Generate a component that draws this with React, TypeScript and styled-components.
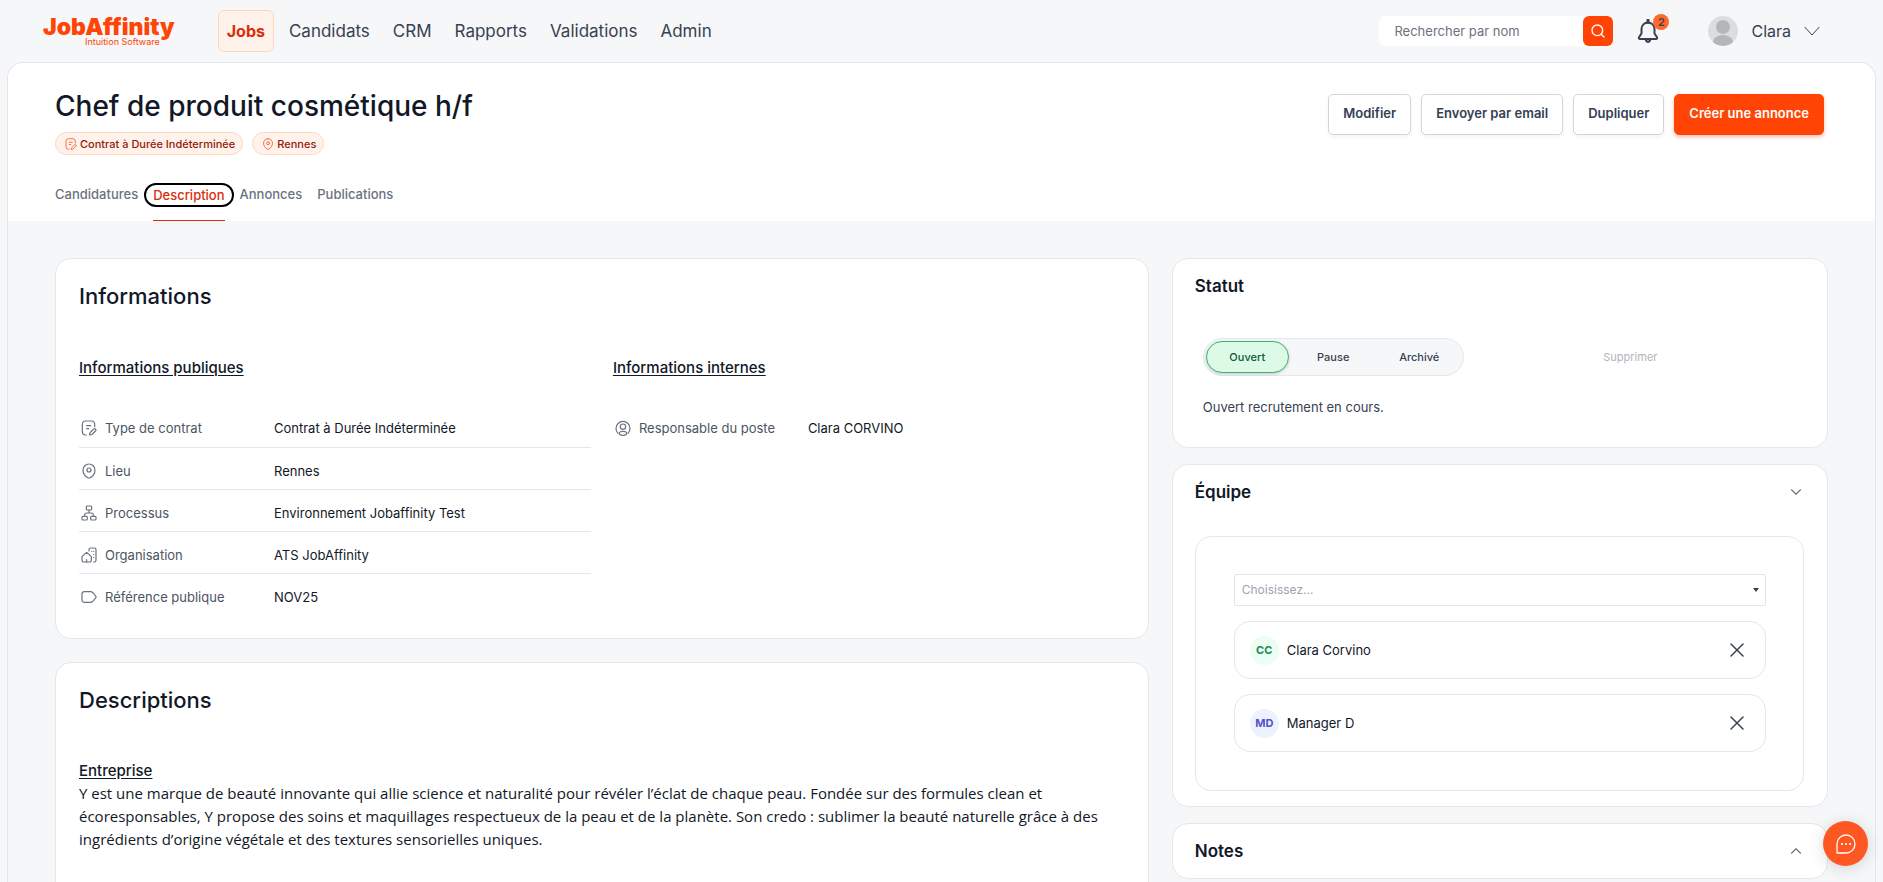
import React from 'react';
import styled, { createGlobalStyle, css } from 'styled-components';
import { ChevronDown, ChevronUp, Search, X } from 'lucide-react';

const GlobalStyle = createGlobalStyle`
  *, *::before, *::after { box-sizing: border-box; }
  body {
    margin: 0;
    background: #f5f7f9;
    color: #111827;
    font-family: Inter, "Liberation Sans", sans-serif;
    font-size: 13px;
    line-height: 20px;
  }
  button, input, select { font: inherit; color: inherit; }
  h1, h2, h3, p, ul, dl, dd { margin: 0; padding: 0; }
  ul { list-style: none; }
  a { color: inherit; text-decoration: none; }
`;

/* ---------- Icons ---------- */

const Stroke = styled.svg.attrs({ viewBox: '0 0 24 24', 'aria-hidden': true })<{ $size: number; $width?: number }>`
  width: ${p => p.$size}px;
  height: ${p => p.$size}px;
  flex: none;
  fill: none;
  stroke: currentColor;
  stroke-width: ${p => p.$width ?? 1.8};
  stroke-linecap: round;
  stroke-linejoin: round;
`;

const ContractIcon = ({ size }: { size: number }) => (
  <Stroke $size={size}>
    <path d="M8 22.500H6.500A4.500 4.500 0 0 1 2 18V6a4.500 4.500 0 0 1 4.500-4.500H16A4.500 4.500 0 0 1 20.500 6v4" />
    <path d="M8.500 8.500h6M8.500 13h3" />
    <path d="M13.500 19l5.500-5.200a1.900 1.900 0 0 1 2.800 2.700l-5.300 5.300-3.800.7z" />
  </Stroke>
);

const PinIcon = ({ size }: { size: number }) => (
  <Stroke $size={size}>
    <path d="M12 1.500a9 9 0 0 0-9 9c0 4.500 3.500 9.500 7.200 11.600a3.600 3.600 0 0 0 3.600 0C17.500 20 21 15 21 10.500a9 9 0 0 0-9-9z" />
    <circle cx="12" cy="10.500" r="3" />
  </Stroke>
);

const ProcessIcon = ({ size }: { size: number }) => (
  <Stroke $size={size}>
    <rect x="8" y="1.500" width="8" height="6" rx="1.500" />
    <rect x="1.500" y="17" width="8" height="5.500" rx="1.500" />
    <rect x="14.500" y="17" width="8" height="5.500" rx="1.500" />
    <path d="M12 7.500V12M5.500 17v-2a3 3 0 0 1 3-3h7a3 3 0 0 1 3 3v2" />
  </Stroke>
);

const BuildingIcon = ({ size }: { size: number }) => (
  <Stroke $size={size}>
    <path d="M1.500 14.500 8.500 8l7 6.500V20a2.500 2.500 0 0 1-2.500 2.500H4A2.500 2.500 0 0 1 1.500 20z" />
    <path d="M8.500 22.500V19M12 6V4a2.500 2.500 0 0 1 2.500-2.500H20A2.500 2.500 0 0 1 22.500 4v16a2.500 2.500 0 0 1-2.500 2.500h-1" />
    <path d="M16 6.500h.1M19 6.500h.1M19 11h.1M19 15.500h.1" />
  </Stroke>
);

const TagIcon = ({ size }: { size: number }) => (
  <Stroke $size={size}>
    <path d="M5 4h9.500a4 4 0 0 1 2.800 1.200l4.500 5a2.700 2.700 0 0 1 0 3.600l-4.500 5a4 4 0 0 1-2.800 1.200H5a3.500 3.500 0 0 1-3.500-3.500v-9A3.500 3.500 0 0 1 5 4z" />
  </Stroke>
);

const PersonIcon = ({ size }: { size: number }) => (
  <Stroke $size={size}>
    <path d="M4.500 20A10.500 10.500 0 1 1 19.500 20" />
    <circle cx="12" cy="10" r="4" />
    <path d="M6.500 20c0-2 2.500-3 5.500-3s5.500 1 5.500 3-2.500 3-5.500 3-5.500-1-5.500-3z" />
  </Stroke>
);

const BellIcon = () => (
  <Stroke $size={24} $width={2}>
    <path d="M12 1v2.500" strokeWidth={3} />
    <path d="M12 3.500A6.500 6.500 0 0 0 5.500 10v4.500L3 18.300c-.4.800 0 1.700 1 1.700h16c1 0 1.400-.9 1-1.700l-2.500-3.800V10A6.500 6.500 0 0 0 12 3.500z" />
    <path d="M9.700 20.500c.3 1.500 1.100 2.300 2.300 2.300s2-.8 2.300-2.300" />
  </Stroke>
);

const MenuChevron = () => (
  <Stroke $size={16} $width={1.500}>
    <path d="M1.500 6.500 12 18 22.500 6.500" />
  </Stroke>
);

const ChatIcon = () => (
  <Stroke $size={24} $width={1.300}>
    <path d="M3 21V12a9 9 0 1 1 9 9z" />
    <path d="M8 12h.1M12 12h.1M16 12h.1" strokeWidth={2} />
  </Stroke>
);

const Avatar = styled.svg.attrs({ viewBox: '0 0 30 30', role: 'img' })`
  width: 30px;
  height: 30px;
  border-radius: 50%;
  background: #dcdddf;
`;

/* ---------- Top bar ---------- */

const TopBar = styled.header`
  display: flex;
  align-items: center;
  justify-content: space-between;
  height: 62px;
  padding: 0 63px 0 43px;
  color: #374151;
`;

const Cluster = styled.div`
  display: flex;
  align-items: center;
`;

const Logo = styled.a`
  display: flex;
  flex-direction: column;
  align-items: flex-end;
  margin-right: 43px;
  color: #ff4405;
`;

const LogoName = styled.span`
  font-size: 23px;
  font-weight: 900;
  line-height: 22px;
`;

const LogoTag = styled.span`
  margin-right: 15px;
  font-size: 9px;
  line-height: 8px;
`;

const Nav = styled.nav`
  display: flex;
  gap: 3px;
`;

const NavLink = styled.a<{ $active?: boolean }>`
  height: 42px;
  padding: 0 9px;
  border: 1px solid transparent;
  border-radius: 6px;
  font-size: 17px;
  line-height: 40px;
  ${p => p.$active && css`
    margin-right: 2px;
    padding: 0 8px;
    border-color: #fcd9bd;
    background: #fef2ea;
    color: #d92d0b;
    font-size: 16px;
    font-weight: 700;
  `}
`;

const SearchForm = styled.form`
  display: flex;
  margin-right: 23px;
  border-radius: 6px;
  background: #fff;
`;

const SearchInput = styled.input`
  width: 204px;
  height: 30px;
  padding: 0 15px;
  border: 0;
  background: none;
  &::placeholder { color: #6b7280; opacity: 1; }
`;

const SearchButton = styled.button`
  display: grid;
  place-items: center;
  width: 30px;
  height: 30px;
  padding: 0;
  border: 0;
  border-radius: 6px;
  background: #ff4405;
  color: #fff;
`;

const BellButton = styled.button`
  position: relative;
  display: grid;
  place-items: center;
  width: 24px;
  height: 30px;
  margin-right: 48px;
  padding: 0;
  border: 0;
  background: none;
`;

const BellBadge = styled.span`
  position: absolute;
  top: -2px;
  right: -9px;
  width: 16px;
  height: 16px;
  border-radius: 8px;
  background: #ff692e;
  font-size: 11px;
  font-weight: 600;
  line-height: 16px;
  text-align: center;
`;

const UserButton = styled.button`
  display: flex;
  align-items: center;
  gap: 13px;
  padding: 0;
  border: 0;
  background: none;
  font-size: 16px;
`;

/* ---------- Page header ---------- */

const Panel = styled.main`
  min-height: calc(100vh - 62px);
  margin: 0 7px;
  border: 1px solid #e2e6ea;
  border-bottom: 0;
  border-radius: 16px 16px 0 0;
  overflow: hidden;
`;

const JobHeader = styled.section`
  padding: 24px 47px 0;
  background: #fff;
`;

const JobTop = styled.div`
  display: flex;
  justify-content: space-between;
  align-items: flex-start;
  padding-top: 1px;
`;

const Title = styled.h1`
  font-size: 28px;
  font-weight: 500;
  line-height: 36px;
`;

const Pills = styled.ul`
  display: flex;
  gap: 9px;
  margin-top: 8px;
`;

const Pill = styled.li`
  display: flex;
  align-items: center;
  gap: 3px;
  height: 23px;
  padding: 0 7px 0 9px;
  border: 1px solid #fcd9bd;
  border-radius: 12px;
  background: #fef2ea;
  color: #97180c;
  font-size: 11px;
  font-weight: 500;
  svg { color: #f0643c; }
`;

const Actions = styled.div`
  display: flex;
  gap: 10px;
  padding: 6px 4px 0 0;
`;

const ActionButton = styled.button<{ $primary?: boolean }>`
  height: 41px;
  padding: 0 14px 3px;
  border: 1px solid ${p => (p.$primary ? '#ff4405' : '#d0d5dd')};
  border-radius: 5px;
  background: ${p => (p.$primary ? '#ff4405' : '#fff')};
  box-shadow: 0 2px 4px ${p => (p.$primary ? 'rgba(255, 68, 5, 0.35)' : 'rgba(16, 24, 40, 0.05)')};
  color: ${p => (p.$primary ? '#fff' : '#344054')};
  font-size: 13px;
  font-weight: 600;
`;

const Tabs = styled.nav`
  display: flex;
  gap: 15px;
  margin-top: 29px;
`;

const Tab = styled.a<{ $active?: boolean }>`
  height: 37px;
  color: #6b7280;
  font-weight: 500;
  ${p => p.$active && css`
    border-bottom: 1px solid #d92d0b;
    color: #d92d0b;
  `}
`;

const TabFocus = styled.span`
  display: block;
  margin: -1px -9px 0;
  padding: 0 7px;
  border: 2px solid #000;
  border-radius: 12px;
`;

/* ---------- Cards ---------- */

const Columns = styled.div`
  display: grid;
  grid-template-columns: minmax(0, 5fr) minmax(0, 3fr);
  gap: 23px;
  padding: 37px 47px 0;
`;

const Column = styled.div<{ $gap: number }>`
  display: flex;
  flex-direction: column;
  gap: ${p => p.$gap}px;
`;

const Card = styled.section<{ $wide?: boolean }>`
  padding: ${p => (p.$wide ? '23px' : '16px 22px')};
  border: 1px solid #e5e7eb;
  border-radius: 16px;
  background: #fff;
`;

const CardTitle = styled.h2`
  font-size: 22px;
  font-weight: 500;
  line-height: 28px;
`;

const SideTitle = styled.h2`
  font-size: 17px;
  font-weight: 600;
  line-height: 22px;
`;

const SectionTitle = styled.h3`
  font-size: 15px;
  font-weight: 500;
  line-height: 23px;
  text-decoration: underline;
  text-underline-offset: 2px;
`;

const InfoColumns = styled.div`
  display: grid;
  grid-template-columns: repeat(2, minmax(0, 1fr));
  gap: 22px;
  margin-top: 46px;
`;

const InfoList = styled.dl`
  margin-top: 26px;
`;

const InfoRow = styled.div`
  display: grid;
  grid-template-columns: 195px 1fr;
  align-items: center;
  height: 42px;
  padding-top: 4px;
  & + & { border-top: 1px solid #e5e7eb; }
`;

const InfoLabel = styled.dt`
  display: flex;
  align-items: center;
  gap: 8px;
  padding-left: 2px;
  color: #4b5563;
  svg { color: #6b7280; }
`;

const Paragraph = styled.p`
  font-family: "Open Sans", sans-serif;
  font-size: 15px;
  line-height: 23px;
`;

const DescriptionBody = styled.div`
  min-height: 240px;
  margin-top: 45px;
`;

/* ---------- Side column ---------- */

const StatusBody = styled.div`
  min-height: 134px;
  padding: 41px 8px 0;
`;

const StatusRow = styled.div`
  display: grid;
  grid-template-columns: auto 1fr;
  align-items: center;
  margin-bottom: 21px;
`;

const Segments = styled.div`
  display: grid;
  grid-template-columns: repeat(3, 83px);
  gap: 3px;
  padding: 2px;
  border: 1px solid #e5e7eb;
  border-radius: 19px;
  background: #f5f7f9;
`;

const Segment = styled.button<{ $active?: boolean }>`
  height: 32px;
  padding: 0;
  border: 1px solid ${p => (p.$active ? '#3cb371' : 'transparent')};
  border-radius: 16px;
  background: ${p => (p.$active ? '#dcfae6' : 'none')};
  box-shadow: ${p => (p.$active ? '0 1px 3px rgba(16, 24, 40, 0.2)' : 'none')};
  color: ${p => (p.$active ? '#085d3a' : '#374151')};
  font-size: 11px;
  font-weight: 500;
`;

const DeleteButton = styled.button`
  justify-self: center;
  padding: 0;
  border: 0;
  background: none;
  color: #b0b4bc;
  font-size: 11px;
`;

const StatusText = styled.p`
  color: #374151;
`;

const SideHead = styled.div`
  display: flex;
  align-items: center;
  justify-content: space-between;
`;

const Toggle = styled.button`
  display: grid;
  padding: 0;
  border: 0;
  background: none;
  color: #6b7280;
`;

const TeamBox = styled.div`
  display: flex;
  flex-direction: column;
  gap: 15px;
  margin: 33px 1px -1px 0;
  padding: 37px 37px 38px 38px;
  border: 1px solid #e5e7eb;
  border-radius: 16px;
`;

const SelectWrap = styled.div`
  position: relative;
  &::after {
    content: '';
    position: absolute;
    top: 14px;
    right: 7px;
    border: 3px solid transparent;
    border-top: 4px solid #374151;
    border-bottom: 0;
    pointer-events: none;
  }
`;

const Select = styled.select`
  display: block;
  width: 100%;
  height: 32px;
  padding: 0 7px;
  border: 1px solid #e2e5ea;
  border-radius: 2px;
  background: #fff;
  color: #9ca3af;
  font-size: 12px;
  appearance: none;
`;

const Members = styled.ul`
  display: flex;
  flex-direction: column;
  gap: 15px;
`;

const Member = styled.li`
  display: flex;
  align-items: center;
  gap: 8px;
  height: 58px;
  padding: 0 16px 0 15px;
  border: 1px solid #e5e7eb;
  border-radius: 16px;
`;

const Initials = styled.span<{ $tone: 'green' | 'blue' }>`
  width: 29px;
  height: 29px;
  border-radius: 50%;
  background: ${p => (p.$tone === 'green' ? '#ecfdf3' : '#eef2ff')};
  color: ${p => (p.$tone === 'green' ? '#178a50' : '#5153cc')};
  font-size: 11px;
  font-weight: 700;
  line-height: 29px;
  text-align: center;
`;

const RemoveButton = styled.button`
  display: grid;
  margin-left: auto;
  padding: 0;
  border: 0;
  background: none;
  color: #374151;
`;

const ChatButton = styled.button`
  position: fixed;
  right: 15px;
  bottom: 16px;
  display: grid;
  place-items: center;
  width: 45px;
  height: 45px;
  padding: 0;
  border: 0;
  border-radius: 50%;
  background: #ff5722;
  box-shadow: 0 2px 16px rgba(0, 0, 0, 0.15);
  color: #fff;
`;

const publicInfo = [
  { icon: <ContractIcon size={16} />, label: 'Type de contrat', value: 'Contrat à Durée Indéterminée' },
  { icon: <PinIcon size={16} />, label: 'Lieu', value: 'Rennes' },
  { icon: <ProcessIcon size={16} />, label: 'Processus', value: 'Environnement Jobaffinity Test' },
  { icon: <BuildingIcon size={16} />, label: 'Organisation', value: 'ATS JobAffinity' },
  { icon: <TagIcon size={16} />, label: 'Référence publique', value: 'NOV25' },
];

const internalInfo = [
  { icon: <PersonIcon size={16} />, label: 'Responsable du poste', value: 'Clara CORVINO' },
];

const Info = ({ title, rows }: { title: string; rows: typeof publicInfo }) => (
  <div>
    <SectionTitle>{title}</SectionTitle>
    <InfoList>
      {rows.map(r => (
        <InfoRow key={r.label}>
          <InfoLabel>{r.icon}{r.label}</InfoLabel>
          <dd>{r.value}</dd>
        </InfoRow>
      ))}
    </InfoList>
  </div>
);

export default function App() {
  return (
    <>
      <GlobalStyle />
      <TopBar>
        <Cluster>
          <Logo href="#">
            <LogoName>JobAffinity</LogoName>
            <LogoTag>Intuition Software</LogoTag>
          </Logo>
          <Nav>
            <NavLink href="#" $active>Jobs</NavLink>
            {['Candidats', 'CRM', 'Rapports', 'Validations', 'Admin'].map(n => (
              <NavLink href="#" key={n}>{n}</NavLink>
            ))}
          </Nav>
        </Cluster>
        <Cluster>
          <SearchForm>
            <SearchInput type="text" placeholder="Rechercher par nom" aria-label="Rechercher par nom" />
            <SearchButton type="button" aria-label="Rechercher"><Search size={16} /></SearchButton>
          </SearchForm>
          <BellButton aria-label="Notifications">
            <BellIcon />
            <BellBadge>2</BellBadge>
          </BellButton>
          <UserButton>
            <Avatar aria-label="Clara">
              <circle cx="15" cy="11" r="7" fill="#b4b6b9" />
              <ellipse cx="15" cy="26" rx="10" ry="7" fill="#b4b6b9" />
            </Avatar>
            Clara
            <MenuChevron />
          </UserButton>
        </Cluster>
      </TopBar>

      <Panel>
        <JobHeader>
          <JobTop>
            <div>
              <Title>Chef de produit cosmétique h/f</Title>
              <Pills>
                <Pill><ContractIcon size={12} />Contrat à Durée Indéterminée</Pill>
                <Pill><PinIcon size={12} />Rennes</Pill>
              </Pills>
            </div>
            <Actions>
              <ActionButton>Modifier</ActionButton>
              <ActionButton>Envoyer par email</ActionButton>
              <ActionButton>Dupliquer</ActionButton>
              <ActionButton $primary>Créer une annonce</ActionButton>
            </Actions>
          </JobTop>
          <Tabs>
            <Tab href="#">Candidatures</Tab>
            <Tab href="#" $active><TabFocus>Description</TabFocus></Tab>
            <Tab href="#">Annonces</Tab>
            <Tab href="#">Publications</Tab>
          </Tabs>
        </JobHeader>

        <Columns>
          <Column $gap={23}>
            <Card $wide>
              <CardTitle>Informations</CardTitle>
              <InfoColumns>
                <Info title="Informations publiques" rows={publicInfo} />
                <Info title="Informations internes" rows={internalInfo} />
              </InfoColumns>
            </Card>
            <Card $wide>
              <CardTitle>Descriptions</CardTitle>
              <DescriptionBody>
                <SectionTitle>Entreprise</SectionTitle>
                <Paragraph>
                  Y est une marque de beauté innovante qui allie science et naturalité pour révéler l’éclat de chaque
                  peau. Fondée sur des formules clean et écoresponsables, Y propose des soins et maquillages
                  respectueux de la peau et de la planète. Son credo : sublimer la beauté naturelle grâce à des
                  ingrédients d’origine végétale et des textures sensorielles uniques.
                </Paragraph>
              </DescriptionBody>
            </Card>
          </Column>

          <Column $gap={16}>
            <Card>
              <SideTitle>Statut</SideTitle>
              <StatusBody>
                <StatusRow>
                  <Segments>
                    <Segment $active>Ouvert</Segment>
                    <Segment>Pause</Segment>
                    <Segment>Archivé</Segment>
                  </Segments>
                  <DeleteButton>Supprimer</DeleteButton>
                </StatusRow>
                <StatusText>Ouvert recrutement en cours.</StatusText>
              </StatusBody>
            </Card>
            <Card>
              <SideHead>
                <SideTitle>Équipe</SideTitle>
                <Toggle aria-label="Replier l’équipe"><ChevronDown size={18} strokeWidth={1.500} /></Toggle>
              </SideHead>
              <TeamBox>
                <SelectWrap>
                  <Select aria-label="Ajouter un membre"><option>Choisissez...</option></Select>
                </SelectWrap>
                <Members>
                  <Member>
                    <Initials $tone="green">CC</Initials>
                    Clara Corvino
                    <RemoveButton aria-label="Retirer Clara Corvino"><X size={24} strokeWidth={1.500} /></RemoveButton>
                  </Member>
                  <Member>
                    <Initials $tone="blue">MD</Initials>
                    Manager D
                    <RemoveButton aria-label="Retirer Manager D"><X size={24} strokeWidth={1.500} /></RemoveButton>
                  </Member>
                </Members>
              </TeamBox>
            </Card>
            <Card>
              <SideHead>
                <SideTitle>Notes</SideTitle>
                <Toggle aria-label="Déplier les notes"><ChevronUp size={18} strokeWidth={1.500} /></Toggle>
              </SideHead>
            </Card>
          </Column>
        </Columns>
      </Panel>
      <ChatButton aria-label="Ouvrir la messagerie"><ChatIcon /></ChatButton>
    </>
  );
}
